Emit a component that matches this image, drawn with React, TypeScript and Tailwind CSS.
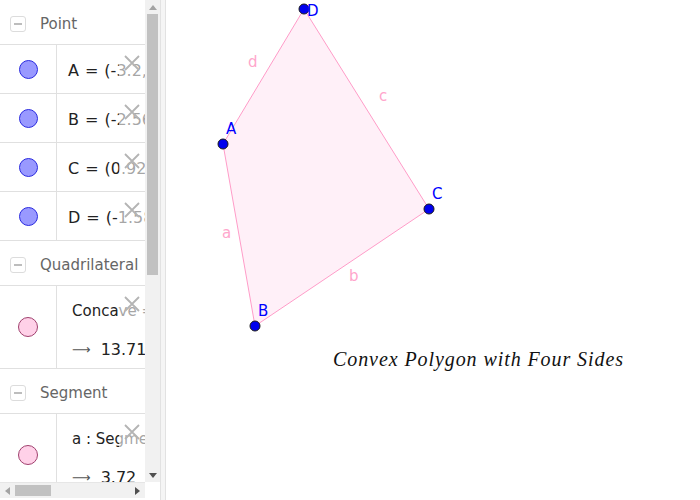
import React from 'react';

const font = { fontFamily: '"DejaVu Sans", "Liberation Sans", sans-serif' };

const CloseX: React.FC = () => (
    <div className="absolute right-0 top-0 w-[26px] h-[34px] bg-white/60 flex items-start justify-center pt-[10px]">
        <svg width="16" height="16" viewBox="0 0 16 16">
            <path d="M1 1 L15 15 M15 1 L1 15" stroke="#b4b4b4" strokeWidth="1.8" />
        </svg>
    </div>
);

const GroupHeader: React.FC<{ title: string }> = ({ title }) => (
    <div className="h-[45px] flex items-center border-b border-[#e0e0e0] pl-[10px] pt-[4px]">
        <div className="w-[16px] h-[16px] rounded-[3px] border border-[#dcdcdc] flex items-center justify-center">
            <div className="w-[8px] h-[1.5px] bg-[#bdbdbd]" />
        </div>
        <span className="ml-[14px] text-[15px] text-[#666666] whitespace-nowrap">{title}</span>
    </div>
);

const PointRow: React.FC<{ label: string; value: string }> = ({ label, value }) => (
    <div className="h-[49px] flex border-b border-[#e0e0e0] relative">
        <div className="w-[57px] shrink-0 border-r border-[#e0e0e0] flex items-center justify-center">
            <div className="w-[19px] h-[19px] rounded-full bg-[#9999ff] border border-[#2a2ae0]" />
        </div>
        <div className="flex items-center pl-[11px] text-[16px] text-[#222] whitespace-nowrap pt-[3px]">
            {label}
            <span className="mx-[6px]">=</span>
            {value}
        </div>
        <CloseX />
    </div>
);

const ValueRow: React.FC<{ top: string; value: string; h: string }> = ({ top, value, h }) => (
    <div className={`${h} flex border-b border-[#e0e0e0] relative`}>
        <div className="w-[57px] shrink-0 border-r border-[#e0e0e0] flex items-center justify-center">
            <div className="w-[20px] h-[20px] rounded-full bg-[#ffd1e8] border border-[#a0406e]" />
        </div>
        <div className="flex flex-col pl-[15px] pt-[15px] text-[15px] text-[#222] whitespace-nowrap">
            <span className="h-[20px] leading-[20px]">{top}</span>
            <span className="mt-[19px] h-[20px] leading-[20px] flex items-center">
                <span className="text-[#555] text-[13px]">⟶</span>
                <span className="ml-[10px] text-[16px]">{value}</span>
            </span>
        </div>
        <CloseX />
    </div>
);

const Sidebar: React.FC = () => (
    <div className="w-[160px] h-[500px] flex flex-col shrink-0" style={font}>
        <div className="flex h-[482px]">
            <div className="w-[145px] overflow-hidden">
                <GroupHeader title="Point" />
                <PointRow label="A" value="(-3.2, 1.84)" />
                <PointRow label="B" value="(-2.56, -1.82)" />
                <PointRow label="C" value="(0.92, 0.52)" />
                <PointRow label="D" value="(-1.58, 4.52)" />
                <GroupHeader title="Quadrilateral" />
                <ValueRow top="Concave = Polygon(A, B, C, D)" value="13.71" h="h-[83px]" />
                <GroupHeader title="Segment" />
                <ValueRow top="a : Segment(A, B)" value="3.72" h="h-[83px]" />
            </div>
            <div className="w-[15px] bg-[#f1f1f1] flex flex-col items-center">
                <div className="h-[14px] flex items-center justify-center">
                    <svg width="8" height="5" viewBox="0 0 8 5"><path d="M0 5 L4 0 L8 5 Z" fill="#a3a3a3" /></svg>
                </div>
                <div className="w-[11px] h-[261px] bg-[#c1c1c1]" />
                <div className="flex-1" />
                <div className="h-[14px] flex items-center justify-center">
                    <svg width="8" height="5" viewBox="0 0 8 5"><path d="M0 0 L4 5 L8 0 Z" fill="#505050" /></svg>
                </div>
            </div>
        </div>
        <div className="flex h-[16px]">
            <div className="w-[145px] bg-[#f1f1f1] border-t border-[#e6e6e6] flex items-center">
                <div className="w-[15px] flex items-center justify-center">
                    <svg width="5" height="8" viewBox="0 0 5 8"><path d="M5 0 L0 4 L5 8 Z" fill="#a3a3a3" /></svg>
                </div>
                <div className="w-[36px] h-[11px] bg-[#c1c1c1]" />
                <div className="flex-1" />
                <div className="w-[15px] flex items-center justify-center">
                    <svg width="5" height="8" viewBox="0 0 5 8"><path d="M0 0 L5 4 L0 8 Z" fill="#505050" /></svg>
                </div>
            </div>
            <div className="w-[15px] bg-white" />
        </div>
        <div className="flex-1" />
    </div>
);

const pts = {
    A: [223, 144],
    B: [255, 326],
    C: [429, 209],
    D: [304, 9],
};

const GraphicsView: React.FC = () => (
    <div className="flex-1 h-[500px] bg-white">
        <svg width="534" height="500" viewBox="166 0 534 500" style={font}>
            <polygon
                points={`${pts.A.join(',')} ${pts.B.join(',')} ${pts.C.join(',')} ${pts.D.join(',')}`}
                fill="#fff0f8"
                stroke="#ff9cc8"
                strokeWidth="1"
            />
            <g fill="#ffa6cc" fontSize="15">
                <text x="248" y="67">d</text>
                <text x="379" y="101">c</text>
                <text x="222" y="238">a</text>
                <text x="349" y="281">b</text>
            </g>
            {Object.entries(pts).map(([k, [x, y]]) => (
                <circle key={k} cx={x} cy={y} r="5" fill="#0000ee" stroke="#1a1a1a" strokeWidth="1" />
            ))}
            <g fill="#0000ff" fontSize="15">
                <text x="226" y="134">A</text>
                <text x="258" y="316">B</text>
                <text x="432" y="199">C</text>
                <text x="307" y="16">D</text>
            </g>
            <text
                x="333"
                y="366"
                fontSize="20"
                fontStyle="italic"
                fill="#111"
                textLength="290"
                lengthAdjust="spacing"
                style={{ fontFamily: '"Liberation Serif", "DejaVu Serif", serif' }}
            >
                Convex Polygon with Four Sides
            </text>
        </svg>
    </div>
);

const App: React.FC = () => (
    <div className="w-[700px] h-[500px] flex bg-white overflow-hidden">
        <Sidebar />
        <div className="w-[6px] h-[500px] bg-[#f5f5f5] border-l border-r border-[#e2e2e2] shrink-0" />
        <GraphicsView />
    </div>
);

export default App;
